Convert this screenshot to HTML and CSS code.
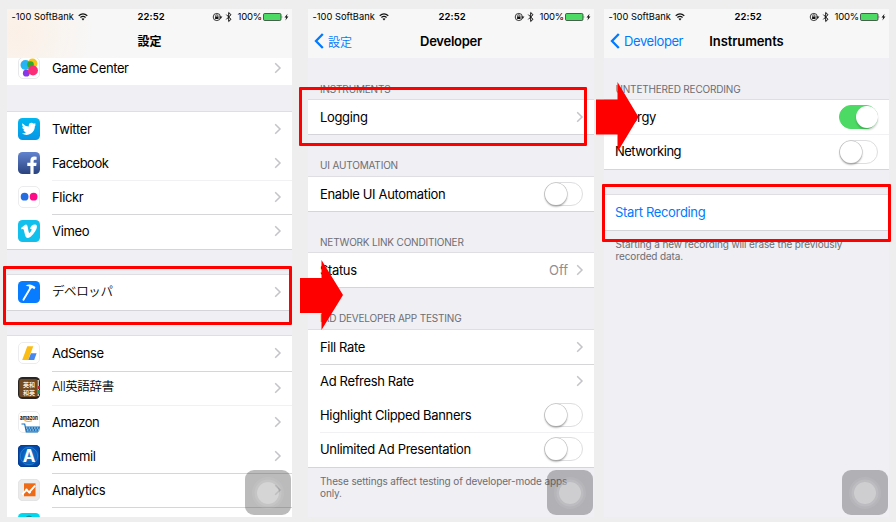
FILE: index.html
```html
<!DOCTYPE html>
<html lang="ja">
<head>
<meta charset="utf-8">
<title>設定</title>
<link rel="stylesheet" href="styles.css">
</head>
<body>
<svg class="defs" aria-hidden="true">
  <defs>
    <linearGradient id="tw" x2="0" y2="1"><stop stop-color="#00b7f1"/><stop offset="1" stop-color="#0796e6"/></linearGradient>
    <linearGradient id="fb" x2="0" y2="1"><stop stop-color="#6284cf"/><stop offset="1" stop-color="#2a437f"/></linearGradient>
    <linearGradient id="gc" x2="1" y2="1"><stop stop-color="#35a5f5"/><stop offset="1" stop-color="#12c8ef"/></linearGradient>
    <radialGradient id="am"><stop stop-color="#1687dd"/><stop offset="1" stop-color="#0549a7"/></radialGradient>
    <symbol id="chev" viewBox="0 0 8 12"><path d="M1.200 1.200 6 6 1.200 10.800" fill="none" stroke="#c3c3c8" stroke-width="1.500"/></symbol>
    <symbol id="back" viewBox="0 0 10 16"><path d="M8.800 1 2 8l6.800 7" fill="none" stroke="#007aff" stroke-width="2.300"/></symbol>
    <symbol id="wifi" viewBox="0 0 10 8"><path d="M.7 2.700Q5-.9 9.300 2.700M2.400 4.500Q5 2.400 7.600 4.500" fill="none" stroke="#111" stroke-width="1.250"/><path d="M3.500 5.700Q5 4.700 6.500 5.700L5 7.500Z" fill="#111"/></symbol>
    <symbol id="state" viewBox="0 0 21 12">
      <circle cx="4.800" cy="6" r="3.600" fill="none" stroke="#222" stroke-width=".9"/>
      <path d="M7 5.600h3.400L8.700 8z" fill="#222"/>
      <rect x="3.100" y="5.500" width="3.400" height="2.500" fill="#111"/><path d="M3.700 5.700V4.800a1.100 1.100 0 0 1 2.200 0v.9" fill="none" stroke="#111" stroke-width=".7"/>
      <path d="M14.300 3.600 19 8.300 16.700 10.500V1.500L19 3.700 14.300 8.400" fill="none" stroke="#111" stroke-width="1"/>
    </symbol>
    <symbol id="batt" viewBox="0 0 26 10">
      <rect x=".5" y="1.500" width="17.500" height="7" rx="1.200" fill="#4cd964" stroke="#222" stroke-width=".7"/>
      <path d="M18.800 3.700q1 1.300 0 2.600z" fill="#222"/><path d="M24.600 1.700 21.500 5.400h1.700l-.8 3 3-3.900h-1.700z" fill="#111"/>
    </symbol>
  </defs>
</svg>
<main class="board">
  <section class="phone p1">
    <header class="bar tinted">
      <div class="status"><span class="carrier">-100 SoftBank</span><svg class="wifi"><use href="#wifi"/></svg><b>22:52</b><svg class="state"><use href="#state"/></svg><span class="pct">100%</span><svg class="batt"><use href="#batt"/></svg></div>
      <h1>設定</h1>
    </header>
    <div class="group first">
      <div class="row game">
        <svg class="app" viewBox="0 0 22 22"><rect x=".5" y=".5" width="21" height="21" rx="4.500" fill="#fff" stroke="#e8e8ea"/><circle cx="14.500" cy="6.500" r="4.900" fill="#f5c51b"/><circle cx="7.500" cy="8" r="5" fill="url(#gc)"/><circle cx="12.500" cy="7.500" r="3.300" fill="#32a82c"/><circle cx="8.300" cy="16.200" r="3.400" fill="#8637ea"/><circle cx="15" cy="13.500" r="4.900" fill="#fb2d79"/></svg>
        <span class="label" style="--ls:-.4px">Game Center</span><svg class="chev"><use href="#chev"/></svg></div>
    </div>
    <div class="group">
      <div class="row">
        <svg class="app" viewBox="0 0 22 22"><rect width="22" height="22" rx="4.500" fill="url(#tw)"/><path d="M4.300 5.300Q7 8.400 10.800 8.500 10.300 4.900 13.500 4.700 14.800 4.700 15.800 5.700L17.600 5 16.700 6.800 18.300 6.500 16.900 8.100Q17 13.100 13 15.600 8.600 18.200 3.900 15.500 6.600 15.500 8 14.200 6 14 5.300 12.100L6.500 12Q4.300 11 4.200 8.800L5.400 9.100Q3.500 7.200 4.300 5.300Z" fill="#fff"/></svg>
        <span class="label">Twitter</span><svg class="chev"><use href="#chev"/></svg></div>
      <div class="row none">
        <svg class="app" viewBox="0 0 22 22"><rect width="22" height="22" rx="4.500" fill="url(#fb)"/><path d="M12.400 22v-8H9.300v-3.300h3.100V8.500q0-3.800 4-3.900l2.200.1v3h-1.500q-1.500 0-1.500 1.400v1.600h3l-.4 3.300h-2.600v8z" fill="#fff"/></svg>
        <span class="label" style="--ls:-.5px">Facebook</span><svg class="chev"><use href="#chev"/></svg></div>
      <div class="row faint">
        <svg class="app" viewBox="0 0 22 22"><rect x=".5" y=".5" width="21" height="21" rx="4.500" fill="#fff" stroke="#ececee"/><circle cx="6.600" cy="10.700" r="3.900" fill="#246cdf"/><circle cx="15.600" cy="10.700" r="3.900" fill="#ff0b87"/></svg>
        <span class="label">Flickr</span><svg class="chev"><use href="#chev"/></svg></div>
      <div class="row">
        <svg class="app" viewBox="0 0 22 22"><rect width="22" height="22" rx="4.500" fill="#12c0ed"/><path d="M3 8 6.500 5.200C8.500 3.800 9.400 5 9.800 7.500 10.300 10.500 10.700 12.900 11.400 12.900 12.200 12.900 13.600 10.600 13.600 9.500 13.600 8.500 12.700 8.600 11.900 8.900 12.800 5.700 14.700 4.300 17.200 4.400 19.500 4.600 19.300 7.500 17.900 10.100 15.900 13.800 12.400 18 9.800 18 7.400 18 7 14.500 6.200 11.500 5.700 9.400 5.500 8.500 3.800 9.500Z" fill="#fff"/></svg>
        <span class="label">Vimeo</span><svg class="chev"><use href="#chev"/></svg></div>
    </div>
    <div class="group">
      <div class="row">
        <svg class="app" viewBox="0 0 22 22"><rect width="22" height="22" rx="4.500" fill="#087cff"/><path d="M5.400 18.800 12.400 7" stroke="#fff" stroke-width="1.900" stroke-linecap="round"/><path d="M7.700 4.700Q11.200 2.600 14.900 4.600L17.500 6.100 16.400 8.300 14.200 7.100 12.600 8 10.900 6.900 11.300 5.500Z" fill="#fff"/></svg>
        <span class="label jp" style="--ls:-.4px">デベロッパ</span><svg class="chev"><use href="#chev"/></svg></div>
    </div>
    <div class="group open">
      <div class="row">
        <svg class="app" viewBox="0 0 22 22"><rect x=".5" y=".5" width="21" height="21" rx="4.500" fill="#fff" stroke="#ececee"/><path d="M9.300 4.200h6L10.100 18H4.200z" fill="#fbbc13"/><path d="M13 11.200h5.600L16.200 18h-6z" fill="#4787ee"/></svg>
        <span class="label" style="--ls:-.5px">AdSense</span><svg class="chev"><use href="#chev"/></svg></div>
      <div class="row">
        <svg class="app" viewBox="0 0 22 22"><rect width="22" height="22" rx="4.500" fill="#292522"/><path d="M19 3h2v16h-2z" fill="#c5c2b8"/><path d="M20 9h2v3h-2z" fill="#b52b36"/><path d="M20 13h2v4h-2z" fill="#24915c"/><rect x="1.200" y="2" width="18.500" height="18" rx="2" fill="#714923"/><text x="5" y="10" class="dict">英和</text><text x="5" y="18" class="dict">和英</text></svg>
        <span class="label jp" style="--ls:-.35px">All英語辞書</span><svg class="chev"><use href="#chev"/></svg></div>
      <div class="row faint">
        <svg class="app" viewBox="0 0 22 22"><rect x=".5" y=".5" width="21" height="21" rx="4.500" fill="#fff" stroke="#ececee"/><text x="2" y="8.500" class="amz" textLength="18" lengthAdjust="spacingAndGlyphs">amazon</text><path d="M6.500 9.600q4 1.800 7.500.2" fill="none" stroke="#f9a51b" stroke-width="1.100"/><path d="M3.500 13h3.200L8.300 21H20" fill="none" stroke="#1670b8" stroke-width="1.200"/><path d="M7.500 15.500H22l-1 5H8.500z" fill="#1670b8"/><path d="M8 17h13.500M9 19h12" stroke="#fff" stroke-width=".9" stroke-dasharray="1.500 1.200"/></svg>
        <span class="label" style="--ls:-.5px">Amazon</span><svg class="chev"><use href="#chev"/></svg></div>
      <div class="row none">
        <svg class="app" viewBox="0 0 22 22"><rect width="22" height="22" rx="4.500" fill="url(#am)"/><rect x=".4" y=".4" width="21.200" height="21.200" rx="4.200" fill="none" stroke="#063b8d"/><circle cx="11" cy="11" r="8.700" fill="none" stroke="#36a5ed" stroke-width=".5"/><text x="11" y="17" text-anchor="middle" class="aletter">A</text></svg>
        <span class="label">Amemil</span><svg class="chev"><use href="#chev"/></svg></div>
      <div class="row">
        <svg class="app" viewBox="0 0 22 22"><rect x=".3" y=".3" width="21.400" height="21.400" rx="4.500" fill="#ebebeb" stroke="#d6d6d6" stroke-width=".6"/><path d="M6 4.300h11.500v13H6z" fill="#ed6b17"/><path d="M4 15.500 8.500 11l2.800 2.200 5.800-6.500" fill="none" stroke="#fff" stroke-width="1.800"/><circle cx="8.500" cy="10.800" r="1.200" fill="#fff"/><circle cx="11.500" cy="13.200" r="1.200" fill="#fff"/></svg>
        <span class="label">Analytics</span><svg class="chev"><use href="#chev"/></svg></div>
      <div class="row">
        <svg class="app" viewBox="0 0 22 22"><rect width="22" height="22" rx="4.500" fill="#00d8ef"/><circle cx="11" cy="6" r="3.500" fill="#078e9d"/></svg>
      </div>
    </div>
    <div class="assist"><i></i></div>
  </section>

  <section class="phone p2">
    <header class="bar">
      <div class="status"><span class="carrier">-100 SoftBank</span><svg class="wifi"><use href="#wifi"/></svg><b>22:52</b><svg class="state"><use href="#state"/></svg><span class="pct">100%</span><svg class="batt"><use href="#batt"/></svg></div>
      <a class="back"><svg><use href="#back"/></svg><span class="jpback">設定</span></a>
      <h1>Developer</h1>
    </header>
    <h2>INSTRUMENTS</h2>
    <div class="group"><div class="row"><span class="label">Logging</span><svg class="chev"><use href="#chev"/></svg></div></div>
    <h2>UI AUTOMATION</h2>
    <div class="group"><div class="row"><span class="label">Enable UI Automation</span><i class="switch"></i></div></div>
    <h2>NETWORK LINK CONDITIONER</h2>
    <div class="group"><div class="row"><span class="label">Status</span><span class="value">Off</span><svg class="chev"><use href="#chev"/></svg></div></div>
    <h2>IAD DEVELOPER APP TESTING</h2>
    <div class="group">
      <div class="row"><span class="label">Fill Rate</span><svg class="chev"><use href="#chev"/></svg></div>
      <div class="row"><span class="label">Ad Refresh Rate</span><svg class="chev"><use href="#chev"/></svg></div>
      <div class="row none"><span class="label">Highlight Clipped Banners</span><i class="switch"></i></div>
      <div class="row faint"><span class="label">Unlimited Ad Presentation</span><i class="switch"></i></div>
    </div>
    <p class="note">These settings affect testing of developer-mode apps<br>only.</p>
    <div class="assist"><i></i></div>
  </section>

  <section class="phone p3">
    <header class="bar">
      <div class="status"><span class="carrier">-100 SoftBank</span><svg class="wifi"><use href="#wifi"/></svg><b>22:52</b><svg class="state"><use href="#state"/></svg><span class="pct">100%</span><svg class="batt"><use href="#batt"/></svg></div>
      <a class="back"><svg><use href="#back"/></svg><span>Developer</span></a>
      <h1>Instruments</h1>
    </header>
    <h2>UNTETHERED RECORDING</h2>
    <div class="group">
      <div class="row"><span class="label">Energy</span><i class="switch on"></i></div>
      <div class="row faint"><span class="label" style="--ls:-.5px">Networking</span><i class="switch"></i></div>
    </div>
    <div class="group action"><div class="row"><span class="label link">Start Recording</span></div></div>
    <p class="note">Starting a new recording will erase the previously<br>recorded data.</p>
    <div class="assist"><i></i></div>
  </section>
</main>
<div class="frame f1"></div>
<div class="frame f2"></div>
<div class="frame f3"></div>
<svg class="arrow a1" viewBox="0 0 43 70"><path d="M0 18h21.500V0L43 35 21.500 70V53H0z"/></svg>
<svg class="arrow a2" viewBox="0 0 43 70"><path d="M0 17.500h21.500V0L42.500 35 21.500 70V52.500H0z"/></svg>
</body>
</html>
```
FILE: styles.css
```css
* { box-sizing: border-box; }
body {
  margin: 0;
  width: 896px;
  height: 522px;
  overflow: hidden;
  position: relative;
  background: #eee;
  color: #000;
  font-family: Inter, "Noto Sans CJK JP", sans-serif;
}
.defs { position: absolute; width: 0; height: 0; }
.board {
  display: flex;
  padding: 9px 7px 5px;
  height: 522px;
}
.phone {
  position: relative;
  flex: none;
  width: 285px;
  height: 508px;
  overflow: hidden;
  background: #efeff4;
}
.p2 { width: 286px; margin: 0 10px 0 16px; }
.bar { height: 49px; background: #f7f7f8; position: relative; }
.tinted { background: radial-gradient(circle 75px at 10px 24px, #fcf0e6 0, #f9f4ef 55%, #f7f7f7 100%) #f7f7f7; }
.status {
  display: flex;
  align-items: center;
  height: 15.500px;
  padding-left: 4.500px;
  font-size: 9.300px;
  white-space: nowrap;
}
.carrier { width: 62px; letter-spacing: .02px; }
.wifi { width: 10px; height: 8px; margin-left: 4px; }
.status b { font-size: 9.500px; font-weight: 600; letter-spacing: .1px; width: 27px; margin-left: 50px; }
.state { width: 21px; height: 12px; margin-left: 47.500px; }
.pct { width: 24px; margin-left: 4.500px; letter-spacing: -.2px; font-size: 9.500px; }
.batt { width: 26px; height: 10px; margin-left: 1px; }
.p2 .state { margin-left: 48.500px; }
h1 {
  margin: 0;
  height: 33px;
  line-height: 33px;
  text-align: center;
  font-size: 13px;
  font-weight: 600;
  letter-spacing: -.1px;
}
.p1 h1 { font-size: 12px; font-weight: 700; }
.p2 h1 { letter-spacing: -.25px; }
.back {
  position: absolute;
  left: 6px;
  top: 15.500px;
  height: 33px;
  display: flex;
  align-items: center;
  gap: 4px;
  color: #007aff;
  font-size: 13px;
  letter-spacing: -.4px;
}
.back svg { width: 10px; height: 16px; }
.jpback { font-size: 12px; letter-spacing: 0; font-weight: 350; }
h2 {
  margin: 0;
  height: 42.300px;
  padding: 24px 0 0 12px;
  line-height: 14px;
  font-size: 10px;
  font-weight: 400;
  letter-spacing: -.18px;
  color: #6d6d72;
}
.group {
  background: #fff;
  box-shadow: 0 -1px 0 #dfdfe3, 0 1px 0 #d5d5d9;
}
.p1 .group { margin-bottom: 26.800px; }
.p1 .first { box-shadow: none; height: 27px; }
.row {
  height: 34.200px;
  display: flex;
  align-items: center;
  padding-left: 12px;
  padding-right: 10px;
  position: relative;
}
.p1 .row { padding-left: 11px; }
.p1 .game { top: -7px; clip-path: inset(7px 0 0 0); }
.row + .row::before {
  content: "";
  position: absolute;
  left: 12px;
  right: 0;
  top: 0;
  height: 1px;
  background: #d6d6d9;
}
.row + .faint::before { background: #f1f1f3; }
.row + .none::before { background: transparent; }
.p1 .row + .row::before { left: 45px; }
.app { width: 22px; height: 22px; margin-right: 12px; flex: none; }
.label {
  flex: 1;
  font-size: 13px;
  line-height: 16px;
  margin-top: -.4px;
  letter-spacing: var(--ls, -.34px);
  white-space: nowrap;
}
.jp { font-size: 12.500px; font-weight: 350; }
.link { color: #007aff; }
.value { font-size: 13px; line-height: 16px; margin-top: -.4px; color: #8e8e93; margin-right: 8px; }
.chev { width: 8px; height: 12px; flex: none; }
.dict { font: 600 6px/1 "Noto Sans CJK JP", sans-serif; fill: #f5ead9; }
.amz { font: 700 6px Inter, sans-serif; fill: #111; }
.aletter { font: 700 17px Inter, sans-serif; fill: #fff; }
.switch {
  width: 39px;
  height: 24px;
  margin-right: 1.500px;
  border: 1px solid #dedee0;
  border-radius: 12px;
  background: #fff;
  position: relative;
}
.p3 h2 { padding-left: 11.500px; }
.p3 .row { padding-left: 11px; }
.p3 .switch { margin-right: 1px; }
.switch::after {
  content: "";
  position: absolute;
  left: 0;
  top: 0;
  width: 22px;
  height: 22px;
  border-radius: 50%;
  background: #fff;
  box-shadow: 0 0 0 .5px #bbb, 0 1.500px 2px rgba(0,0,0,.4);
}
.on { background: #4cd964; border-color: #4cd964; }
.on::after { left: 15.500px; box-shadow: 0 2px 2px rgba(0,0,0,.2); }
.action { margin-top: 26.800px; }
.note {
  margin: 8px 0 0 12px;
  font-size: 10px;
  line-height: 12px;
  letter-spacing: -.12px;
  color: #6d6d72;
  white-space: nowrap;
}
.p3 .note { margin-left: 11.500px; }
.assist {
  position: absolute;
  left: 238px;
  top: 461px;
  width: 46px;
  height: 45px;
  border-radius: 9px;
  background: rgba(75,75,78,.38);
  display: grid;
  place-items: center;
}
.p2 .assist { left: 238.500px; }
.assist i {
  width: 22px;
  height: 22px;
  border-radius: 50%;
  background: rgba(255,255,255,.38);
  box-shadow: 0 0 0 2.500px rgba(255,255,255,.1), 0 0 0 5px rgba(255,255,255,.07);
}
.frame { position: absolute; border: 3px solid #f00; border-radius: 1px; }
.f1 { left: 3px; top: 266px; width: 289px; height: 59px; }
.f2 { left: 299px; top: 87px; width: 288px; height: 59px; }
.f3 { left: 602px; top: 184px; width: 289px; height: 58px; }
.arrow { position: absolute; width: 43px; height: 70px; fill: #f00; }
.a1 { left: 300px; top: 260px; }
.a2 { left: 596px; top: 82px; }
```
